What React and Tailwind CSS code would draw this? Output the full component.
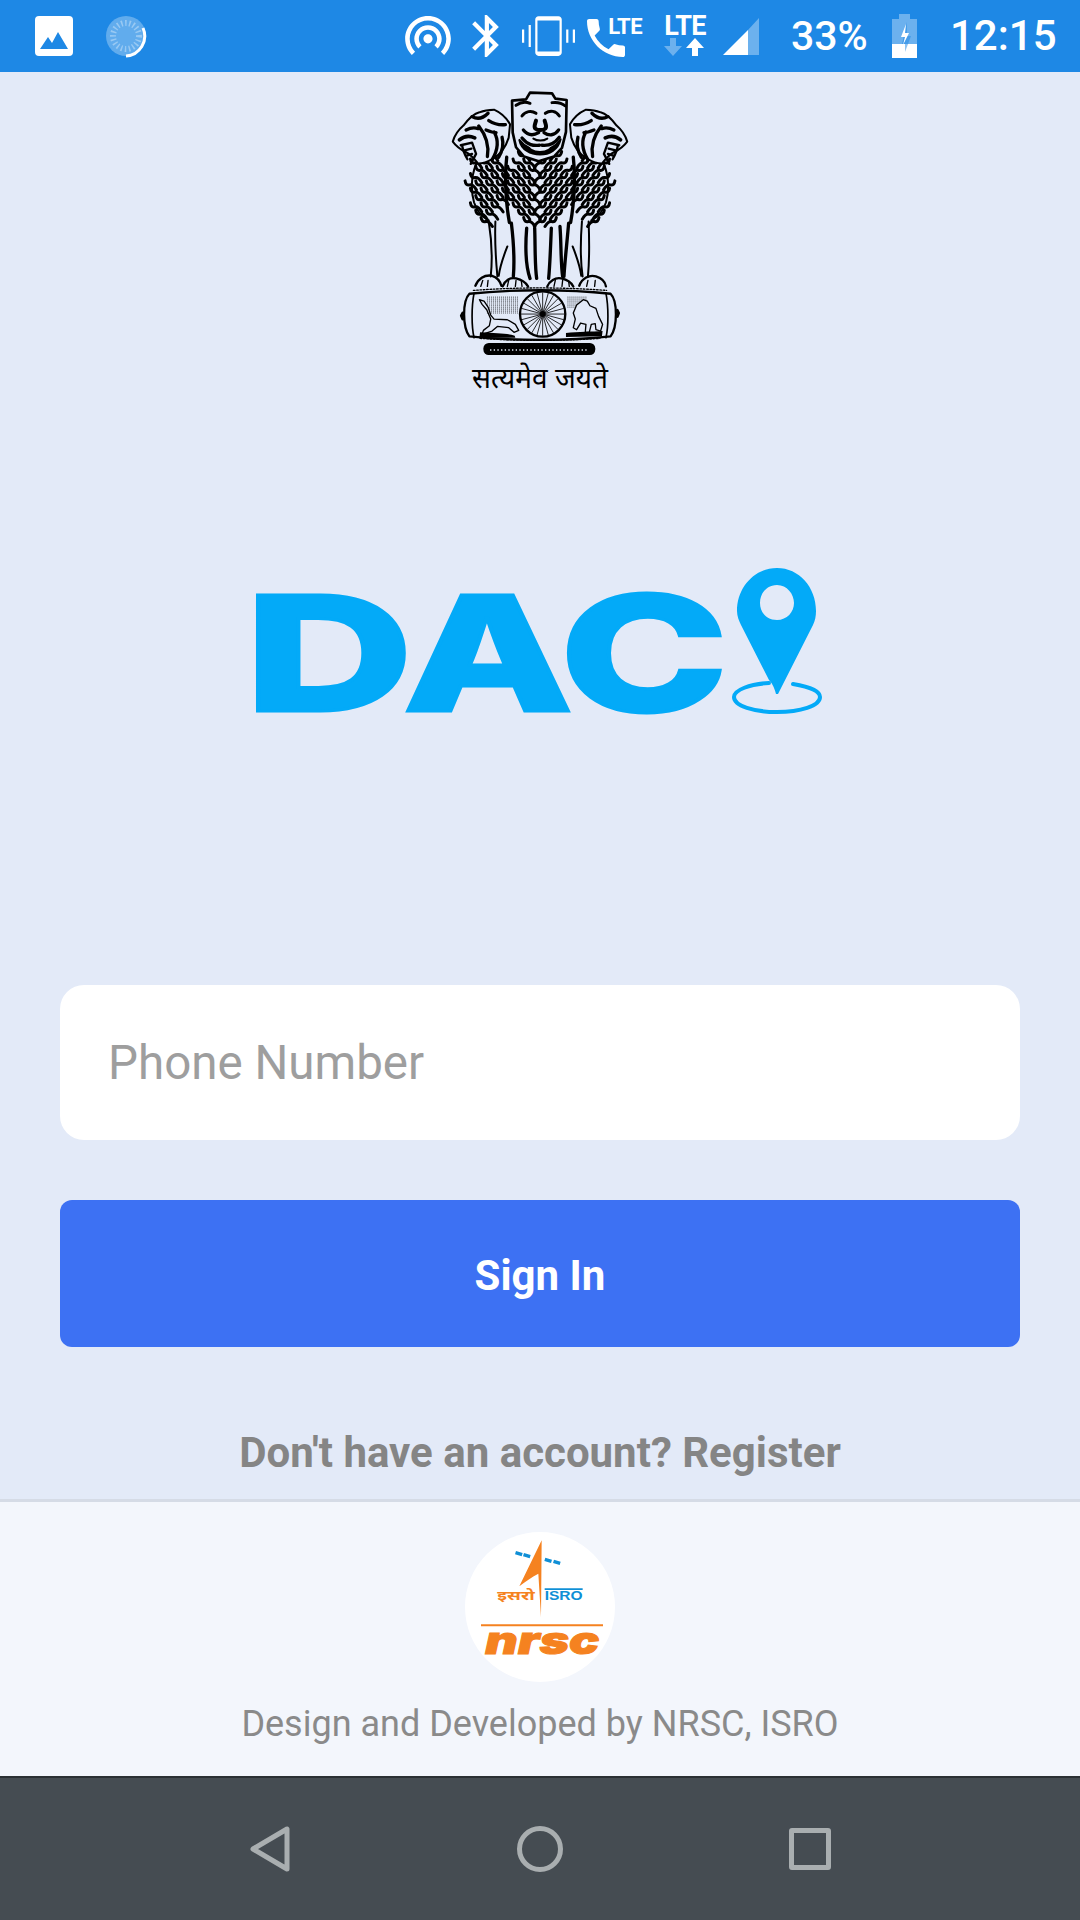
const BLUE = '#03aaf8';
const BG = '#e3eaf8';

// mane tufts of the emblem, wavy chevrons leaning towards the centre line
const inEllipse = (x, y, cx, cy, rx, ry) => ((x - cx) / rx) ** 2 + ((y - cy) / ry) ** 2 < 1;
const tufts = [];
for (let row = 0; row < 10; row++) {
  for (let col = 0; col < 14; col++) {
    const y = 228 + row * 22;
    const x = 122 + col * 32 + (row % 2 ? 16 : 0);
    const inside =
      inEllipse(x, y, 178, 318, 58, 110) ||
      inEllipse(x, y, 330, 325, 104, 116) ||
      inEllipse(x, y, 482, 318, 58, 110);
    if (!inside) continue;
    const d = x < 330 ? 1 : -1;
    tufts.push(`M${x - d * 17} ${y - 13}q${d * 2} 15 ${d * 14} 12q${d * 10} -2 ${d * 20} 15`);
  }
}

const spokes = Array.from({ length: 24 }, (_, i) => {
  const a = (i * Math.PI) / 12;
  return `M${338 + Math.cos(a) * 8} ${703 + Math.sin(a) * 8}L${338 + Math.cos(a) * 64} ${703 + Math.sin(a) * 64}`;
});

const dots = [];
for (let y = 652; y < 706; y += 6) {
  for (let x = 172; x < 268; x += 6) dots.push([x, y]);
  for (let x = 414; x < 470; x += 6) if (y < 688) dots.push([x, y]);
}

function LionHead() {
  return (
    <g fill="none" stroke="#000" strokeLinecap="round" strokeLinejoin="round">
      <path fill={BG} strokeWidth="6" d="M68 185c6-20 18-36 32-48 12-16 30-36 48-40 14-6 30-8 44-8 18 8 36 22 48 44l-4 40c-8 26-24 50-48 64-14 8-30 14-44 14-10-12-20-26-36-34-16-8-30-18-40-32z" />
      <path strokeWidth="10" d="M126 110c18 10 34 4 48-10M176 122c16 10 32 14 50 12M146 138c22 28 32 56 26 92M192 156c14 24 12 54-6 84M216 172c6 22 2 40-10 60M108 150c12-6 24-8 36-4M168 150c10 4 20 8 30 8" />
      <path strokeWidth="11" d="M88 180c14-12 30-14 46-6" />
      <path strokeWidth="7" d="M92 196l34-8 12 34-16 30M100 212l24-6M108 228l18-6M96 196c2 14 8 28 16 42" />
    </g>
  );
}

function Emblem() {
  return (
    <svg viewBox="0 0 660 850" className="h-[283px] w-[220px]">
      <g fill="none" stroke="#000" strokeLinecap="round" strokeLinejoin="round">
        {/* bodies */}
        <path strokeWidth="6" d="M146 236c-22 40-26 90-14 132 8 24 24 44 44 54M514 236c22 40 26 90 14 132-8 24-24 44-44 54" />
        <path strokeWidth="9" d={tufts.join('')} />
        <path strokeWidth="10" d="M230 232c-6 50-4 130 8 196M430 232c6 50 4 130-8 196" />

        <LionHead />
        <g transform="translate(660 0) scale(-1 1)">
          <LionHead />
        </g>

        {/* centre lion */}
        <path fill={BG} strokeWidth="8" d="M246 62l42-4 12-20 66 2 10 16 34 4-2 96-12 48-24 26-46 14-44-14-24-28-10-44z" />
        <path strokeWidth="9" d="M258 76c14-10 28-12 42-6M366 68c14-2 28 0 40 10M276 108c10-14 28-18 42-8M346 100c14-10 32-8 42 8" />
        <path strokeWidth="12" d="M318 122c-2 10-8 18-2 24s24 6 30 0 0-14-2-24" />
        <path strokeWidth="10" d="M280 150c16 20 32 16 46 8M342 158c14 10 32 10 44-8M276 174c18 22 34 24 52 22M336 196c18 2 36-2 52-24" />
        <path fill="#000" strokeWidth="6" d="M268 180c6 30 34 44 62 44s54-14 62-46c-12 18-30 26-30 26s-6 12-32 12-32-12-32-12-18-8-30-24z" />
        <path strokeWidth="6" d="M310 176c12 8 30 8 42 0" />

        {/* legs */}
        <path strokeWidth="6" d="M176 425c8 50 12 110 6 165M196 425c-2 50 0 100 6 165M456 425c-4 50-6 110 2 165M476 425c2 50 4 100-2 165" />
        <path strokeWidth="10" d="M244 430c6 50 10 110 6 160M290 445c-4 50-4 110 10 151M314 445c2 50 0 110 6 151M364 445c-2 50-4 110-8 151M390 440c4 50 2 110 8 150M416 430c-4 50-12 120-14 160" />
        <path strokeWidth="6" d="M232 500c-12 30-22 60-26 88M428 500c12 30 22 60 26 88" />

        {/* paws */}
        <path strokeWidth="7" d="M136 618c8-20 26-34 50-30 14 4 24 16 28 30M218 620c6-18 22-28 40-24s28 10 36 24M352 620c6-16 24-28 42-24s30 12 36 24M448 618c8-22 30-34 50-28s28 18 30 30" />
        <path strokeWidth="4" d="M152 620l6-18M172 620l2-18M232 620l4-18M256 620l2-18M276 620l-2-16M372 620l4-18M396 620l2-18M418 620l-2-16M470 620l4-18M494 620l2-18" />

        {/* abacus */}
        <path strokeWidth="7" d="M118 642c-10 10-16 34-16 62s6 52 16 66c130 14 294 14 424 0 10-14 16-38 16-66s-6-52-16-62c-130-14-294-14-424 0z" />
        <path strokeWidth="5" d="M132 640c-8 40-8 100 0 134M528 640c8 40 8 100 0 134" />
        <path strokeWidth="9" d="M98 700l-4 8 4 10M562 692l4 8-4 10" />
        <path strokeWidth="4" strokeDasharray="5 5" d="M130 632c130-10 270-10 400 0M150 776c120 8 240 8 360 0" />
        <circle cx="338" cy="703" r="68" strokeWidth="7" fill={BG} />
        <path strokeWidth="2.5" d={spokes.join('')} />
      </g>
      <g fill="#000">
        {dots.map(([x, y]) => (
          <circle key={x + '-' + y} cx={x} cy={y} r="1.5" />
        ))}
        <circle cx="338" cy="703" r="9" />
        {/* horse and bull */}
        <path
          fill={BG}
          stroke="#000"
          strokeWidth="4"
          strokeLinejoin="round"
          d="M148 660l14 4 12 18 8 24 10 12 40 2 24 14 10 18-14 6-16-14-34-4-16 14-30 10 4-12 18-14 4-20-12-28-14-16z"
        />
        <path
          fill={BG}
          stroke="#000"
          strokeWidth="4"
          strokeLinejoin="round"
          d="M430 700l10-24 20-16 12 4 8 14 18 8 8 24 12 24-6 20-14-4-2-18-12 2-6 24-12 0 2-24-16-4-12 20-10-6 6-26z"
        />
        <path d="M150 758c50 4 80 2 104 10l2 6-108 0zM408 760c36-4 80-4 110-6l-2 16-108 2z" />
        <rect x="160" y="790" width="336" height="36" rx="16" />
      </g>
      <path stroke={BG} strokeWidth="4" strokeDasharray="4 7" fill="none" d="M180 811h296" />
    </svg>
  );
}

function DacLogo() {
  return (
    <svg viewBox="0 -30 600 240" className="h-[240px] w-[600px]">
      <g
        fill={BLUE}
        stroke={BLUE}
        strokeWidth="3"
        strokeLinejoin="miter"
        fontFamily="Inter, 'Liberation Sans', sans-serif"
        fontWeight="800"
        fontSize="160"
      >
        <text x="5" y="160" textLength="168" lengthAdjust="spacingAndGlyphs">
          D
        </text>
        <text x="163" y="160" textLength="170" lengthAdjust="spacingAndGlyphs">
          A
        </text>
        <text x="320" y="160" textLength="168" lengthAdjust="spacingAndGlyphs">
          C
        </text>
      </g>
      {/* location pin */}
      <path
        fill={BLUE}
        fillRule="evenodd"
        d="M537 17c22 0 39 19 39 43 0 5-1 10-3 14l-35 69h-2c-1-4-3-10-7-14L501 74c-2-4-4-9-4-14 0-24 18-43 40-43zm0 17c-10 0-17 8-17 18s7 17 17 17 17-8 17-17-7-18-17-18z"
      />
      <path
        fill="none"
        stroke={BLUE}
        strokeWidth="4"
        strokeLinecap="round"
        d="M553 133c19 3 27 8 27 13 0 9-20 15-43 15s-43-6-43-15c0-7 16-13 35-14"
      />
    </svg>
  );
}

function NrscLogo() {
  return (
    <svg viewBox="75 125 450 450" className="h-[150px] w-[150px] rounded-full bg-white">
      <path fill="#f58220" d="M305 150l-2 230-8-130c-20 10-40 25-57 38z" />
      <path fill="#0f8fd6" d="M228 182l20 6-3 10-20-6zM252 188l20 6-3 10-20-6zM316 202l20 6-3 10-20-6zM342 208l20 6-3 10-20-6z" />
      <text x="172" y="328" fill="#f58220" fontSize="36" fontWeight="700" fontFamily="'Noto Sans Devanagari', 'Noto Sans', sans-serif" textLength="112" lengthAdjust="spacingAndGlyphs">
        इसरो
      </text>
      <path fill="#0f8fd6" d="M314 294h114v5h-114z" />
      <text x="314" y="330" fill="#0f8fd6" fontSize="36" fontWeight="700" fontFamily="'Liberation Sans', sans-serif" textLength="114" lengthAdjust="spacingAndGlyphs">
        ISRO
      </text>
      <path fill="#f58220" d="M123 402h366v6h-366z" />
      <text x="136" y="490" fill="#f58220" stroke="#f58220" strokeWidth="3" fontSize="112" fontStyle="italic" fontWeight="900" fontFamily="Inter, 'Liberation Sans', sans-serif" textLength="342" lengthAdjust="spacingAndGlyphs">
        nrsc
      </text>
    </svg>
  );
}

function StatusBar() {
  return (
    <div className="flex h-[72px] shrink-0 items-center bg-[#1e88e5] pr-[25px] pl-[35px] text-white">
      <svg viewBox="0 0 38 40" className="h-[40px] w-[38px]">
        <rect width="38" height="40" rx="4" fill="#fff" />
        <path fill="#1e88e5" d="M5 33l8-12 4 6 6-11 10 17z" />
      </svg>
      <svg viewBox="0 0 42 44" className="ml-[32px] h-[44px] w-[42px]">
        <circle cx="21" cy="22" r="20" fill="#fff" opacity="0.3" />
        <circle cx="21" cy="22" r="13" fill="none" stroke="#fff" strokeWidth="6" strokeDasharray="1.5 2.5" opacity="0.35" />
        <path d="M38 14a20 20 0 0 1-17 28" fill="none" stroke="#fff" strokeWidth="3" />
      </svg>

      <svg viewBox="2 3 20 17.5" fill="#fff" className="ml-auto h-[40px] w-[46px]">
        <path d="M12 11c-1.1 0-2 .9-2 2 0 .55.23 1.05.59 1.41.36.36.86.59 1.41.59s1.05-.23 1.41-.59c.36-.36.59-.86.59-1.41 0-1.1-.9-2-2-2zm6 2c0-3.31-2.69-6-6-6s-6 2.69-6 6c0 1.65.68 3.15 1.76 4.24l1.42-1.42C8.45 15.1 8 14.11 8 13c0-2.21 1.79-4 4-4s4 1.79 4 4c0 1.11-.45 2.1-1.18 2.82l1.42 1.42C17.32 16.15 18 14.65 18 13zm-6-10C6.48 3 2 7.48 2 13c0 2.76 1.12 5.26 2.93 7.07l1.42-1.42C4.9 17.21 4 15.21 4 13c0-4.42 3.58-8 8-8s8 3.58 8 8c0 2.21-.9 4.21-2.35 5.65l1.42 1.42C20.88 18.26 22 15.76 22 13c0-5.52-4.48-10-10-10z" />
      </svg>
      <svg viewBox="5 2 12.71 20" fill="#fff" className="ml-[21px] h-[42px] w-[27px]">
        <path d="M17.71 7.71L12 2h-1v7.59L6.41 5 5 6.41 10.59 12 5 17.59 6.41 19 11 14.41V22h1l5.71-5.71-4.3-4.29 4.3-4.29zM13 5.83l1.88 1.88L13 9.59V5.83zm1.88 10.46L13 18.17v-3.76l1.88 1.88z" />
      </svg>
      <svg viewBox="0 3 24 18" fill="#fff" className="ml-[23px] h-[40px] w-[53px]">
        <path d="M0 15h1V9H0v6zm3 2h1V7H3v10zm17-8v6h1V9h-1zm3 0v6h1V9h-1zM16.5 3h-9C6.67 3 6 3.67 6 4.5v15c0 .83.67 1.5 1.5 1.5h9c.83 0 1.5-.67 1.5-1.5v-15c0-.83-.67-1.5-1.5-1.5zM17 19H7V5h10v14z" />
      </svg>

      <div className="relative ml-[12px] h-[42px] w-[55px]">
        <svg viewBox="3 3 18 18" fill="#fff" className="absolute top-[4px] left-0 h-[38px] w-[38px]">
          <path d="M6.62 10.79c1.44 2.83 3.76 5.14 6.59 6.59l2.2-2.2c.27-.27.67-.36 1.02-.24 1.12.37 2.33.57 3.57.57.55 0 1 .45 1 1V20c0 .55-.45 1-1 1-9.39 0-17-7.61-17-17 0-.55.45-1 1-1h3.5c.55 0 1 .45 1 1 0 1.25.2 2.45.57 3.57.11.35.03.74-.25 1.02l-2.2 2.2z" />
        </svg>
        <span className="absolute top-[-5px] right-0 font-['Roboto'] text-[22px] font-bold tracking-tight">LTE</span>
      </div>

      <div className="ml-[19px] flex h-[44px] w-[48px] flex-col items-center">
        <span className="font-['Roboto'] text-[27px] leading-[24px] font-bold tracking-tight">LTE</span>
        <svg viewBox="0 0 48 18" className="h-[18px] w-[48px]">
          <path fill="#fff" opacity="0.35" d="M9 0h6v8h6l-9 10L3 8h6z" />
          <path fill="#fff" d="M34 0l9 10h-6v8h-6v-8h-6z" />
        </svg>
      </div>

      <svg viewBox="0 0 36 37" className="ml-[14px] h-[37px] w-[36px]">
        <path fill="#fff" opacity="0.35" d="M36 0v37H25V12z" />
        <path fill="#fff" d="M25 12v25H0z" />
      </svg>

      <span className="ml-[32px] w-[77px] font-['Roboto'] text-[41px] leading-none font-medium">33%</span>

      <svg viewBox="0 0 25 44" className="ml-[24px] h-[44px] w-[25px]">
        <path fill="#fff" opacity="0.35" d="M7 0h11v5h7v25H0V5h7z" />
        <path fill="#fff" d="M0 30h25v14H0z" />
        <path fill="#1e88e5" opacity="0.5" d="M10 30l5-22v14h4l-6 16v-8z" />
        <path fill="#fff" d="M14 10l-5 13h4l-2 8 6-12h-4z" />
      </svg>

      <span className="ml-[33px] w-[105px] font-['Roboto'] text-[42px] leading-none font-medium">12:15</span>
    </div>
  );
}

function NavBar() {
  return (
    <div className="flex h-[144px] shrink-0 items-center justify-center border-t-2 border-[#2b3034] bg-[#454c52]">
      <div className="flex w-[270px] justify-center">
        <svg viewBox="0 0 40 46" className="h-[46px] w-[40px]" fill="none" stroke="#a9aeb0" strokeWidth="5" strokeLinejoin="round">
          <path d="M37 3v40L3 23z" />
        </svg>
      </div>
      <div className="flex w-[270px] justify-center">
        <div className="h-[46px] w-[46px] rounded-full border-[5px] border-[#a9aeb0]" />
      </div>
      <div className="flex w-[270px] justify-center">
        <div className="h-[42px] w-[42px] rounded-[3px] border-[5px] border-[#a9aeb0]" />
      </div>
    </div>
  );
}

export default function App() {
  return (
    <div className="flex h-[1920px] w-[1080px] flex-col bg-[#e3eaf8] font-['Roboto',sans-serif]">
      <StatusBar />

      <main className="flex flex-1 flex-col items-center">
        <div className="mt-[8px] flex w-[220px] flex-col items-center">
          <Emblem />
          <span className="mt-[2px] font-['Noto_Sans_Devanagari','Liberation_Serif',serif] text-[28px] leading-[32px] whitespace-nowrap text-black">
            सत्यमेव जयते
          </span>
        </div>

        <div className="mt-[124px]">
          <DacLogo />
        </div>

        <div className="mt-[224px] flex h-[155px] w-[960px] items-center rounded-[24px] bg-white px-[48px] pt-[3px] text-[47.5px] text-[#9e9e9e]">
          Phone Number
        </div>

        <button
          type="button"
          className="mt-[60px] h-[147px] w-[960px] rounded-[12px] bg-[#3d71f3] pt-[4px] text-[42px] font-bold text-white"
        >
          Sign In
        </button>

        <p className="mt-[83px] text-[42px] leading-[46px] font-bold text-[#858585]">Don't have an account? Register</p>
      </main>

      <footer className="flex h-[277px] shrink-0 flex-col items-center border-t-[3px] border-[#d5dbe6] bg-[#f3f6fc] pt-[30px]">
        <NrscLogo />
        <p className="mt-[21px] text-[36px] leading-[42px] text-[#8a8a8a]">Design and Developed by NRSC, ISRO</p>
      </footer>

      <NavBar />
    </div>
  );
}
